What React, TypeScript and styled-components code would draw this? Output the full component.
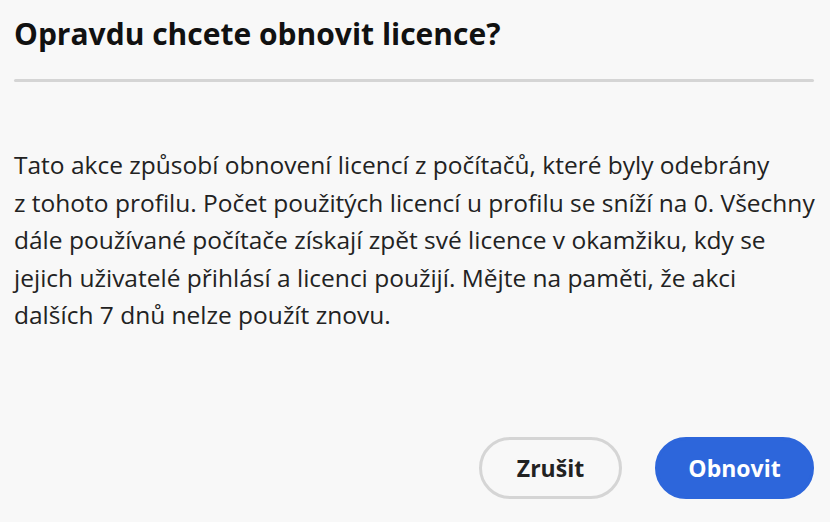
import React from 'react';
import styled, { createGlobalStyle } from 'styled-components';

const GlobalStyle = createGlobalStyle`
  html, body {
    margin: 0;
    padding: 0;
    background: #f8f8f8;
  }
  body {
    font-family: "Open Sans", "Noto Sans", sans-serif;
  }
`;

const Dialog = styled.div`
  box-sizing: border-box;
  width: 830px;
  height: 522px;
  padding: 0 16px 23px 14px;
  display: flex;
  flex-direction: column;
  background: #f8f8f8;
`;

const Heading = styled.h1`
  margin: 0;
  padding-top: 14px;
  font-size: 30px;
  font-weight: 700;
  line-height: 40px;
  color: #111;
`;

const Divider = styled.hr`
  margin: 25px 0 0 0;
  border: none;
  height: 3px;
  border-radius: 2px;
  background: #d5d5d5;
`;

const Content = styled.p`
  flex: 1;
  margin: 0;
  padding-top: 64px;
  font-size: 24.5px;
  line-height: 37.5px;
  color: #222;
  white-space: nowrap;
`;

const Footer = styled.div`
  display: flex;
  justify-content: flex-end;
  gap: 33px;
`;

const Button = styled.button<{ $primary?: boolean }>`
  box-sizing: border-box;
  height: 62px;
  padding: 0 30px;
  border-radius: 31px;
  font-family: "Open Sans", "Noto Sans", sans-serif;
  font-size: 23px;
  font-weight: 700;
  cursor: pointer;
  border: 3px solid ${p => (p.$primary ? '#2d66db' : '#d5d5d5')};
  background: ${p => (p.$primary ? '#2d66db' : 'transparent')};
  color: ${p => (p.$primary ? '#fff' : '#222')};
  min-width: ${p => (p.$primary ? '159px' : '143px')};
`;

const lines = [
  'Tato akce způsobí obnovení licencí z počítačů, které byly odebrány',
  'z tohoto profilu. Počet použitých licencí u profilu se sníží na 0. Všechny',
  'dále používané počítače získají zpět své licence v okamžiku, kdy se',
  'jejich uživatelé přihlásí a licenci použijí. Mějte na paměti, že akci',
  'dalších 7 dnů nelze použít znovu.',
];

export default function App() {
  return (
    <>
      <GlobalStyle />
      <Dialog>
        <Heading>Opravdu chcete obnovit licence?</Heading>
        <Divider />
        <Content>
          {lines.map((l, i) => (
            <React.Fragment key={i}>
              {l}
              {i < lines.length - 1 && <br />}
            </React.Fragment>
          ))}
        </Content>
        <Footer>
          <Button>Zrušit</Button>
          <Button $primary>Obnovit</Button>
        </Footer>
      </Dialog>
    </>
  );
}
